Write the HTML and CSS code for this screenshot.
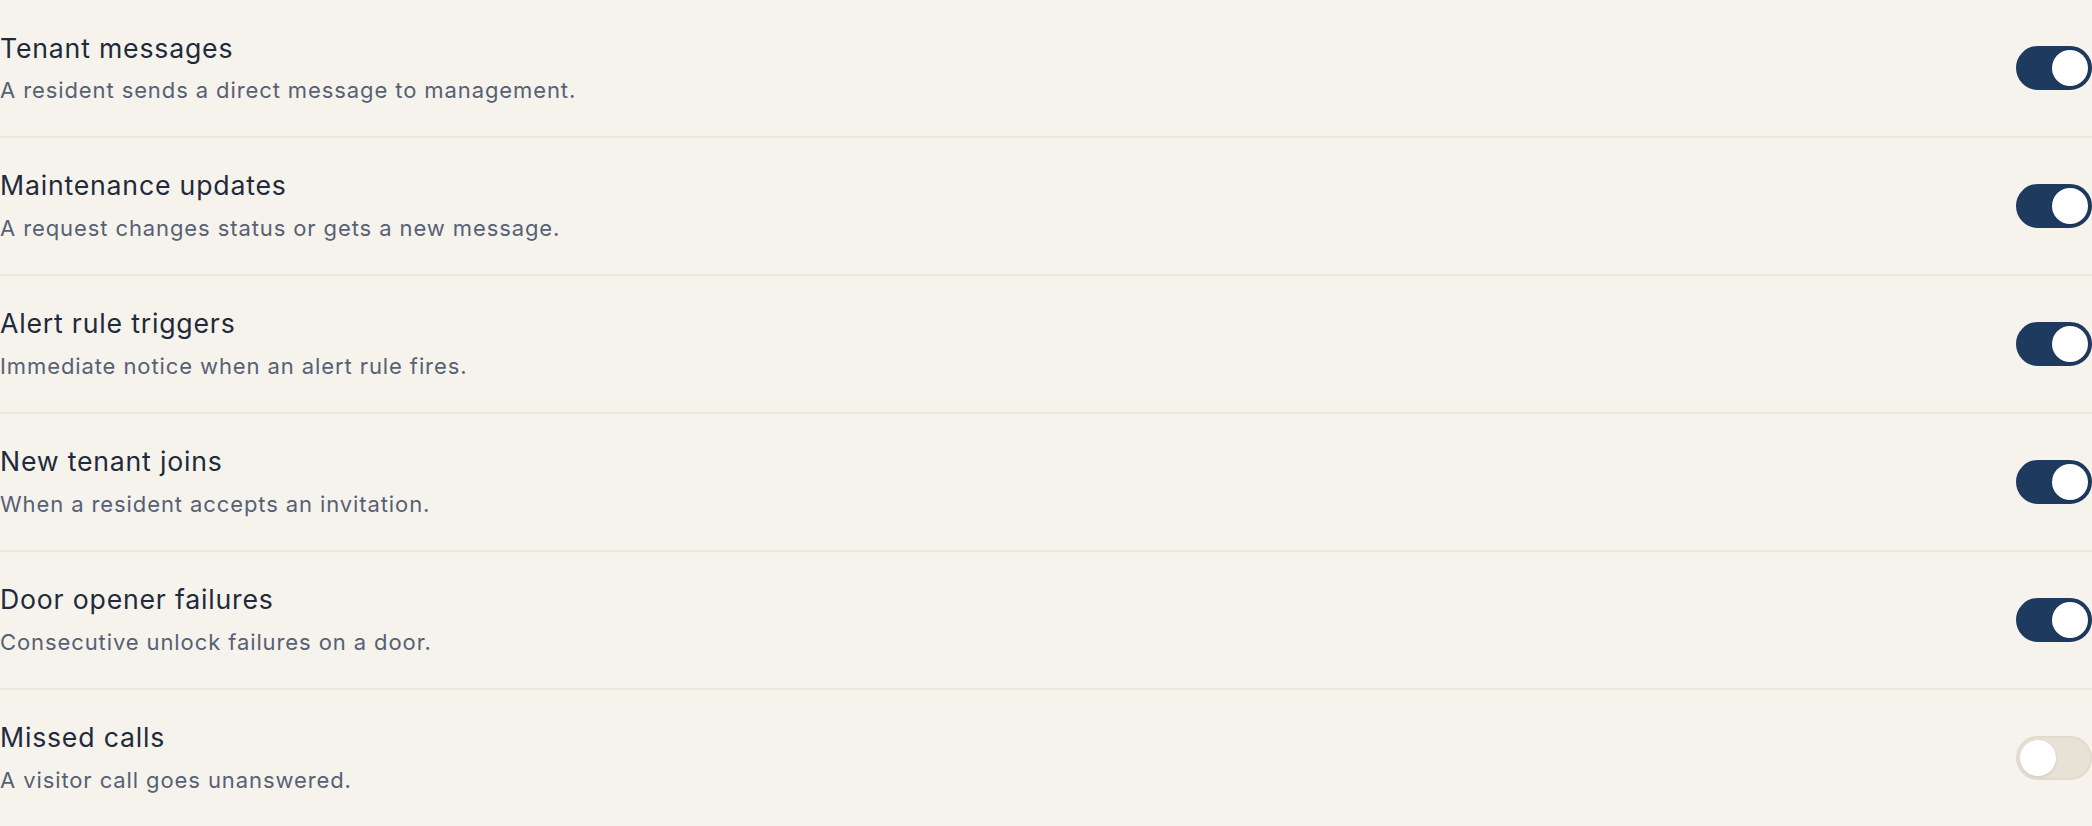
FILE: index.html
```html
<!DOCTYPE html>
<html lang="en">
<head>
<meta charset="utf-8">
<title>Notification settings</title>
<link rel="stylesheet" href="styles.css">
</head>
<body>
<ul class="settings">
  <li class="row">
    <div class="text">
      <div class="title">Tenant messages</div>
      <div class="desc">A resident sends a direct message to management.</div>
    </div>
    <button class="toggle on" aria-pressed="true"><span class="knob"></span></button>
  </li>
  <li class="row">
    <div class="text">
      <div class="title">Maintenance updates</div>
      <div class="desc">A request changes status or gets a new message.</div>
    </div>
    <button class="toggle on" aria-pressed="true"><span class="knob"></span></button>
  </li>
  <li class="row">
    <div class="text">
      <div class="title">Alert rule triggers</div>
      <div class="desc">Immediate notice when an alert rule fires.</div>
    </div>
    <button class="toggle on" aria-pressed="true"><span class="knob"></span></button>
  </li>
  <li class="row">
    <div class="text">
      <div class="title">New tenant joins</div>
      <div class="desc">When a resident accepts an invitation.</div>
    </div>
    <button class="toggle on" aria-pressed="true"><span class="knob"></span></button>
  </li>
  <li class="row">
    <div class="text">
      <div class="title">Door opener failures</div>
      <div class="desc">Consecutive unlock failures on a door.</div>
    </div>
    <button class="toggle on" aria-pressed="true"><span class="knob"></span></button>
  </li>
  <li class="row">
    <div class="text">
      <div class="title">Missed calls</div>
      <div class="desc">A visitor call goes unanswered.</div>
    </div>
    <button class="toggle off" aria-pressed="false"><span class="knob"></span></button>
  </li>
</ul>
</body>
</html>
```
FILE: styles.css
```css
html, body {
  margin: 0;
  padding: 0;
  background: #f6f3ec;
}
body {
  font-family: Inter, "Noto Sans", "Liberation Sans", sans-serif;
  overflow: hidden;
}
.settings {
  list-style: none;
  margin: 0;
  padding: 0;
}
.row {
  display: flex;
  align-items: center;
  justify-content: space-between;
  padding: 29.5px 0 29.67px;
  border-bottom: 2px solid #ece6db;
}
.row:last-child {
  border-bottom: none;
}
.text {
  display: flex;
  flex-direction: column;
  gap: 7.5px;
}
.title {
  font-size: 26.67px;
  line-height: 37.33px;
  letter-spacing: 0.8px;
  color: #1f2a3b;
  font-weight: 400;
}
.desc {
  font-size: 22px;
  line-height: 32px;
  letter-spacing: 0.9px;
  color: #566175;
}
.toggle {
  position: relative;
  width: 76px;
  height: 44px;
  border-radius: 22px;
  border: 2px solid transparent;
  padding: 0;
  margin: 0;
  cursor: pointer;
  flex-shrink: 0;
}
.toggle.on {
  background: #1e3a5f;
  border-color: #1e3a5f;
}
.toggle.off {
  background: #e8e1d6;
  border-color: #e2dacd;
}
.knob {
  position: absolute;
  top: 2px;
  width: 36px;
  height: 36px;
  border-radius: 50%;
  background: #ffffff;
  box-shadow: 0 1px 3px rgba(0, 0, 0, 0.12);
}
.toggle.on .knob {
  right: 2px;
}
.toggle.off .knob {
  left: 2px;
}
```
